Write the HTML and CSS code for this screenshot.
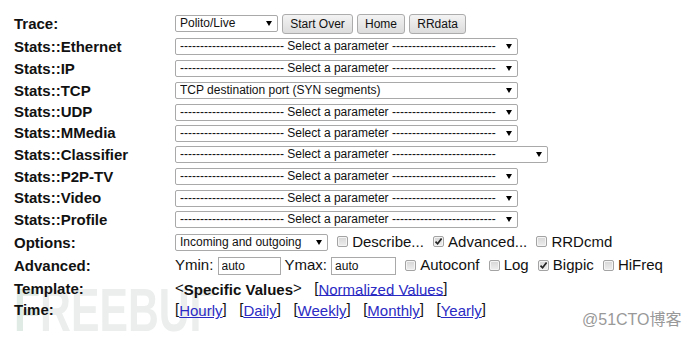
FILE: index.html
```html
<!DOCTYPE html>
<html lang="en">
<head>
<meta charset="utf-8">
<title>Tstat RRD - Stats</title>
<link rel="stylesheet" href="styles.css">
</head>
<body>
<div class="mark-freebuf"><span class="logo-f">F</span>REEBUF</div>

<div class="form">
	<div class="row tall">
		<div class="label">Trace:</div>
		<div class="field">
			<span class="pick w-trace"><select><option>Polito/Live</option></select></span>
			<button class="btn">Start Over</button>
			<button class="btn">Home</button>
			<button class="btn">RRdata</button>
		</div>
	</div>
	<div class="row">
		<div class="label">Stats::Ethernet</div>
		<div class="field"><span class="pick"><select><option>-------------------------- Select a parameter --------------------------</option></select></span></div>
	</div>
	<div class="row">
		<div class="label">Stats::IP</div>
		<div class="field"><span class="pick"><select><option>-------------------------- Select a parameter --------------------------</option></select></span></div>
	</div>
	<div class="row">
		<div class="label">Stats::TCP</div>
		<div class="field"><span class="pick"><select><option>TCP destination port (SYN segments)</option></select></span></div>
	</div>
	<div class="row short">
		<div class="label">Stats::UDP</div>
		<div class="field"><span class="pick"><select><option>-------------------------- Select a parameter --------------------------</option></select></span></div>
	</div>
	<div class="row short">
		<div class="label">Stats::MMedia</div>
		<div class="field"><span class="pick"><select><option>-------------------------- Select a parameter --------------------------</option></select></span></div>
	</div>
	<div class="row">
		<div class="label">Stats::Classifier</div>
		<div class="field"><span class="pick w-wide"><select><option>-------------------------- Select a parameter --------------------------</option></select></span></div>
	</div>
	<div class="row">
		<div class="label">Stats::P2P-TV</div>
		<div class="field"><span class="pick"><select><option>-------------------------- Select a parameter --------------------------</option></select></span></div>
	</div>
	<div class="row short">
		<div class="label">Stats::Video</div>
		<div class="field"><span class="pick"><select><option>-------------------------- Select a parameter --------------------------</option></select></span></div>
	</div>
	<div class="row">
		<div class="label">Stats::Profile</div>
		<div class="field"><span class="pick"><select><option>-------------------------- Select a parameter --------------------------</option></select></span></div>
	</div>

	<div class="row taller">
		<div class="label">Options:</div>
		<div class="field">
			<span class="pick w-opt"><select><option>Incoming and outgoing</option></select></span>
			<span class="cb"></span>Describe...
			<span class="cb on"><svg viewBox="0 0 9 9" width="9" height="9"><path d="M1.5 4.6 L3.6 6.8 L7.6 1.6" fill="none" stroke="#222" stroke-width="1.7"/></svg></span>Advanced...
			<span class="cb"></span>RRDcmd
		</div>
	</div>
	<div class="row tall">
		<div class="label">Advanced:</div>
		<div class="field">
			Ymin: <input class="num" type="text" value="auto">
			Ymax: <input class="num w-max" type="text" value="auto">
			<span class="cb"></span>Autoconf
			<span class="cb"></span>Log
			<span class="cb on"><svg viewBox="0 0 9 9" width="9" height="9"><path d="M1.5 4.6 L3.6 6.8 L7.6 1.6" fill="none" stroke="#222" stroke-width="1.7"/></svg></span>Bigpic
			<span class="cb"></span>HiFreq
		</div>
	</div>
	<div class="row">
		<div class="label">Template:</div>
		<div class="field">&lt;<b>Specific Values</b>&gt;&nbsp;&nbsp; [<a href="#">Normalized Values</a>]</div>
	</div>
	<div class="row short">
		<div class="label">Time:</div>
		<div class="field">[<a href="#">Hourly</a>]&nbsp;&nbsp; [<a href="#">Daily</a>]&nbsp;&nbsp; [<a href="#">Weekly</a>]&nbsp;&nbsp; [<a href="#">Monthly</a>]&nbsp;&nbsp; [<a href="#">Yearly</a>]</div>
	</div>
</div>

<div class="mark-51cto">@51CTO博客</div>
</body>
</html>
```

FILE: styles.css
```css
html, body {
	height: 100%;
}

body {
	margin: 0;
	padding: 12px 0 0 14px;
	box-sizing: border-box;
	background: #fff;
	color: #111;
	font-family: "Liberation Sans", Arial, sans-serif;
	font-size: 15px;
	overflow: hidden;
	position: relative;
}

.form {
	position: relative;
	z-index: 1;
}

.row {
	display: flex;
	align-items: center;
	height: 22px;
}
.row.short { height: 21px; }
.row.tall { height: 23px; }
.row.taller { height: 24px; }

.label {
	width: 161px;
	flex: none;
	font-weight: bold;
}

.field {
	white-space: nowrap;
}
.field > * {
	vertical-align: middle;
}

/* selects */
.pick {
	position: relative;
	display: inline-block;
	width: 343px;
	height: 17px;
}
.pick.w-trace { width: 103px; }
.pick.w-wide { width: 373px; }
.pick.w-opt { width: 153px; }

.pick select {
	-webkit-appearance: none;
	appearance: none;
	display: block;
	width: 100%;
	height: 17px;
	margin: 0;
	padding: 0 0 0 4px;
	border: 1px solid #a9a9a9;
	border-radius: 2px;
	background: #fff;
	color: #111;
	font-family: "Liberation Sans", Arial, sans-serif;
	font-size: 12px;
	line-height: 15px;
}
.pick::after {
	content: "";
	position: absolute;
	right: 6px;
	top: 6px;
	border-left: 3.5px solid transparent;
	border-right: 3.5px solid transparent;
	border-top: 5px solid #000;
	pointer-events: none;
}

/* buttons */
.btn {
	height: 20px;
	margin: 0;
	padding: 0 7px;
	border: 1px solid #acacac;
	border-radius: 3px;
	background: linear-gradient(#f3f3f3, #dcdcdc);
	color: #111;
	font-family: "Liberation Sans", Arial, sans-serif;
	font-size: 12px;
}

/* checkboxes */
.cb {
	display: inline-flex;
	align-items: center;
	justify-content: center;
	box-sizing: border-box;
	width: 11px;
	height: 11px;
	margin: 0 4px 0 5px;
	border: 1px solid #a3a3a3;
	border-radius: 2px;
	background: linear-gradient(#d6d6d6, #eeeeee);
	box-shadow: inset 0 0 0 1px #f4f4f4;
	position: relative;
	top: -1px;
}

/* text inputs */
.num {
	box-sizing: border-box;
	width: 63px;
	height: 18px;
	margin: 0;
	padding: 0 3px;
	border: 1px solid #a9a9a9;
	font-family: "Liberation Sans", Arial, sans-serif;
	font-size: 12px;
	color: #111;
}
.num.w-max { width: 65px; }

a {
	color: #2b2bc4;
	text-decoration: underline;
}

/* watermarks */
.mark-freebuf {
	position: absolute;
	left: 14px;
	top: 280px;
	z-index: 0;
	font-family: "Liberation Sans", Arial, sans-serif;
	font-weight: bold;
	font-size: 61px;
	line-height: 61px;
	color: #ebeeed;
	transform: scaleX(0.7);
	transform-origin: left top;
	white-space: nowrap;
}
.logo-f {
	color: #e0ebe5;
}

.mark-51cto {
	position: absolute;
	left: 582px;
	top: 310px;
	z-index: 2;
	font-family: "Liberation Sans", "Noto Sans CJK SC", sans-serif;
	font-size: 16px;
	line-height: 20px;
	color: #999;
	text-shadow: 0 0 1px #fff;
}
```
